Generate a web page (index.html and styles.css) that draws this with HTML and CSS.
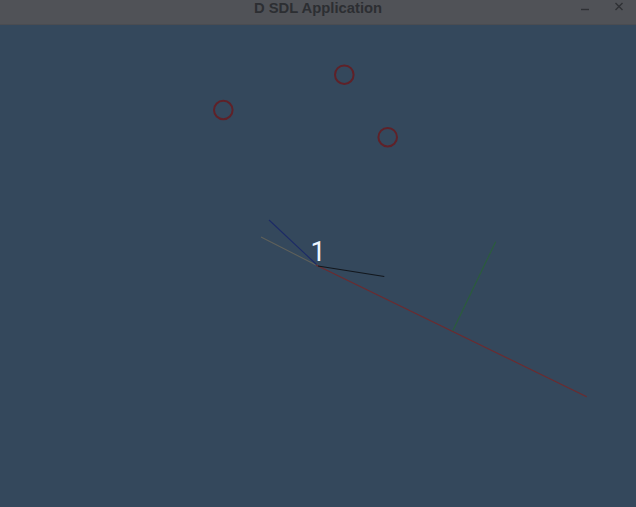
FILE: index.html
```html
<!DOCTYPE html>
<html>
<head>
<meta charset="utf-8">
<link rel="stylesheet" href="styles.css">
</head>
<body>
<div class="window">
  <div class="titlebar">
    <div class="spacer"></div>
    <div class="title">D SDL Application</div>
    <div class="controls">
      <svg class="ctl" width="12" height="12" viewBox="0 0 12 12"><path d="M2 9.5H10" stroke="#2f3135" stroke-width="1.4"/></svg>
      <svg class="ctl" width="12" height="12" viewBox="0 0 12 12"><path d="M2.5 3L9.5 10M9.5 3L2.5 10" stroke="#2f3135" stroke-width="1.4"/></svg>
    </div>
  </div>
  <div class="canvas">
    <svg class="scene" width="636" height="482" viewBox="0 0 636 482">
      <g class="circles" fill="none" stroke="#5f2128" stroke-width="2">
        <circle cx="223.3" cy="85" r="9.3"/>
        <circle cx="344.3" cy="49.7" r="9.3"/>
        <circle cx="387.7" cy="112.2" r="9.3"/>
      </g>
      <g class="lines" stroke-width="1.1">
        <line x1="261" y1="212" x2="316" y2="240" stroke="#5e605a"/>
        <line x1="269" y1="195" x2="316.5" y2="239.5" stroke="#1c2a66"/>
        <line x1="316" y1="240" x2="586.7" y2="371.7" stroke="#6e2a2e"/>
        <line x1="318" y1="241" x2="384.3" y2="251.5" stroke="#13171d"/>
        <line x1="452.7" y1="306" x2="495.7" y2="216.7" stroke="#2a5e3a"/>
      </g>
      <text class="label" x="310.5" y="236">1</text>
    </svg>
  </div>
</div>
</body>
</html>
```
FILE: styles.css
```css
html, body {
  margin: 0;
  padding: 0;
}
body {
  width: 636px;
  height: 507px;
  overflow: hidden;
  background: #34485c;
}
.window {
  display: flex;
  flex-direction: column;
  width: 636px;
  height: 507px;
}
.titlebar {
  height: 25px;
  flex: 0 0 25px;
  background: #505257;
  display: grid;
  grid-template-columns: 1fr auto 1fr;
  align-items: start;
  box-sizing: border-box;
  border-bottom: 1px solid #4a4c51;
}
.title {
  font-family: "Liberation Sans", Arial, sans-serif;
  font-weight: 700;
  font-size: 14.8px;
  color: #2c2e32;
  line-height: normal;
}
.controls {
  display: flex;
  justify-content: flex-end;
  align-items: flex-start;
  gap: 22px;
  padding-right: 11px;
}
.ctl {
  display: block;
}
.canvas {
  flex: 1;
  background: #34485c;
}
.scene {
  display: block;
}
.label {
  font-family: Roboto, "Open Sans", sans-serif;
  font-size: 27px;
  fill: #eef7ff;
}
```
